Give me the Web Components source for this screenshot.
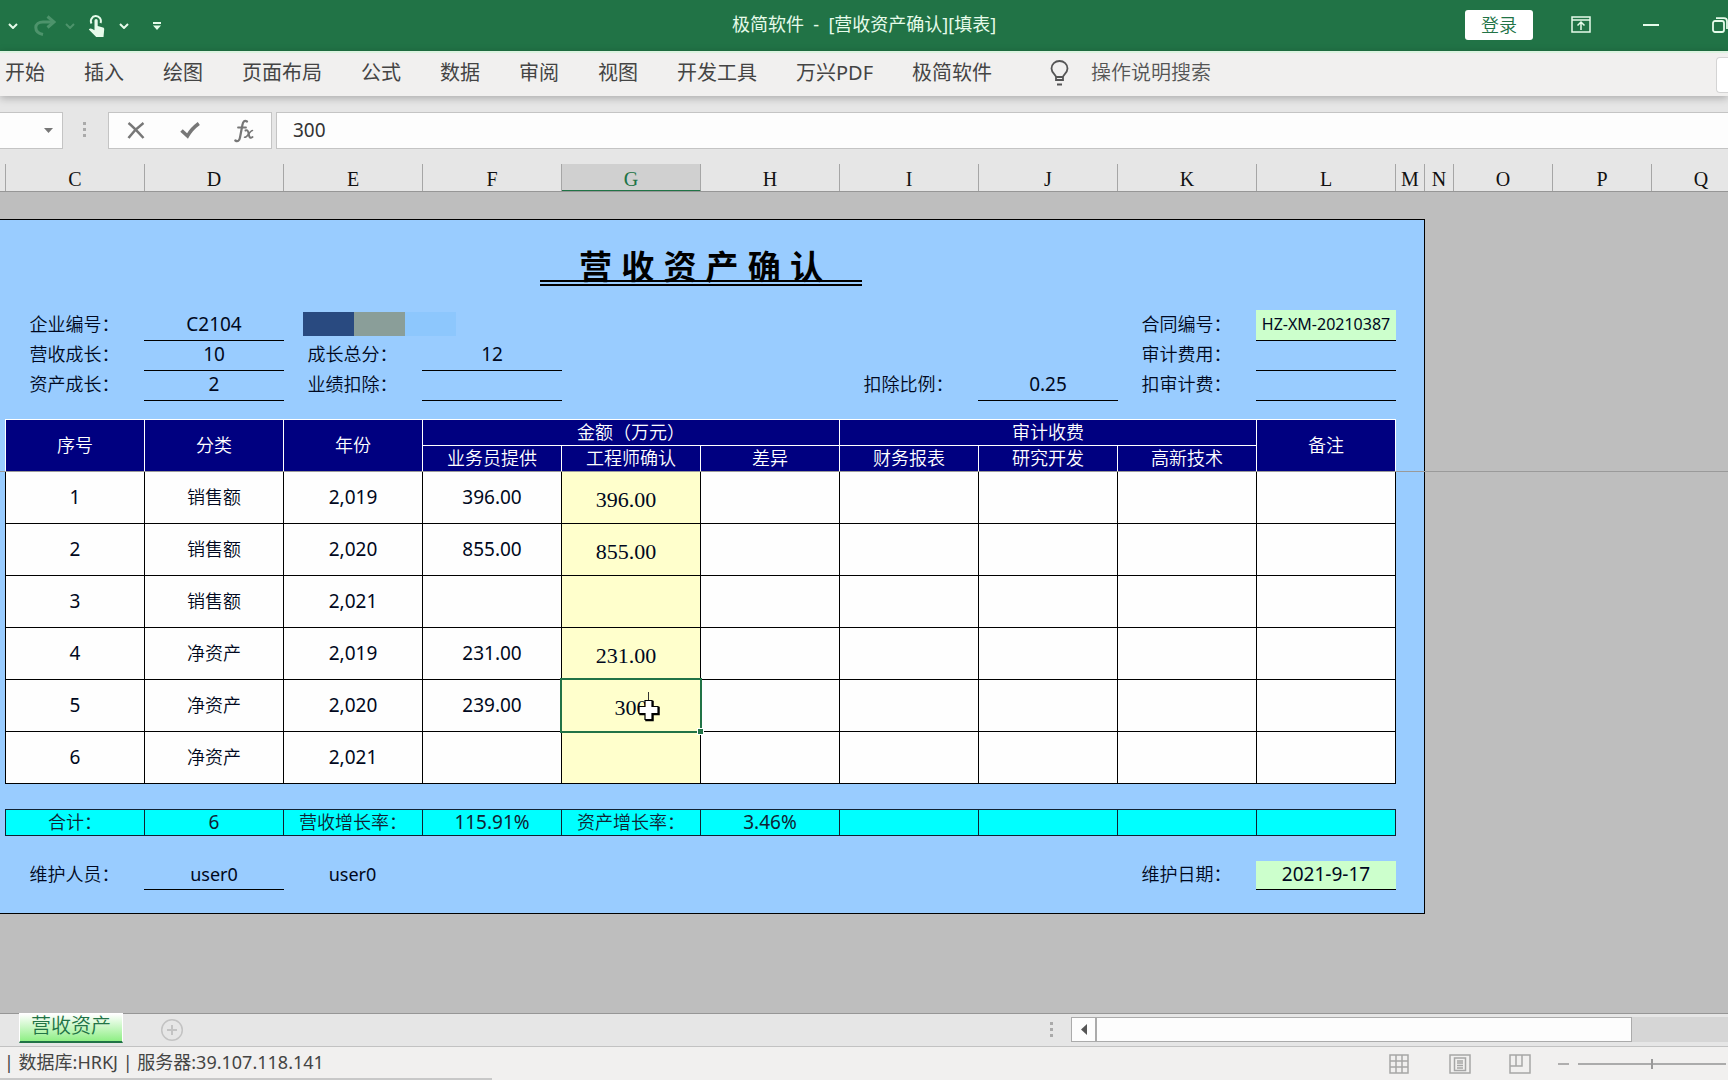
<!DOCTYPE html>
<html lang="zh-CN">
<head>
<meta charset="utf-8">
<title>极简软件 - [营收资产确认][填表]</title>
<style>
html,body{margin:0;height:100%}
body{background:#bebebe;color:#111;font:350 18px/26px "Noto Sans","Noto Sans CJK SC",sans-serif;overflow:hidden}
</style>
</head>
<body>
<xl-app></xl-app>
<script>
const RESET = `
*{box-sizing:border-box}
button,input{font:inherit;color:inherit;border:0;margin:0;padding:0;background:none;border-radius:0;outline:0}
button{display:flex;align-items:center;justify-content:center;white-space:nowrap}
svg{display:block;flex:none}
`;
function define(name, css, html) {
  customElements.define(name, class extends HTMLElement {
    constructor() {
      super();
      this.attachShadow({mode: "open"});
    }
    connectedCallback() {
      const body = typeof html === "function" ? html(this) : html;
      this.shadowRoot.innerHTML = `<style>${RESET}${css}</style>${body}`;
    }
  });
}

define("xl-chevron", `:host{display:block}`,
  `<svg width="10" height="6" viewBox="0 0 10 6" fill="none" stroke="currentColor" stroke-width="2"><path d="M1 1l4 4 4-4"/></svg>`);

define("xl-grip", `:host{display:flex;flex-direction:column;gap:3px}i{width:3px;height:3px;background:#aaa}`,
  `<i></i><i></i><i></i>`);

define("xl-titlebar", `
:host{display:grid;grid-template-columns:1fr auto 1fr;align-items:center;height:51px;background:#217346;color:#e6fbea}
.quick{display:flex;align-items:center;padding-left:8px}
.quick button{height:28px}
.chev{width:10px;margin-right:16px}
.dim{color:#4d936b}
.redo{width:22px;margin-right:9px}
.dim.chev{margin-right:13px}
.touch{width:17px;margin-right:14px}
.custom{width:10px;margin-left:7px}
h1{font:inherit;font-weight:400;margin:0;padding-bottom:4px;white-space:pre}
.win{display:flex;align-items:center;justify-content:flex-end;padding-bottom:2px;min-width:0}
.login{width:68px;height:30px;background:#fff;color:#217346;border-radius:3px;margin-right:38px}
.min{margin:0 53px 0 52px}
.restore{width:16px;overflow:hidden;justify-content:flex-start}
`, `
<div class="quick">
  <button class="chev" aria-label="撤消选项"><xl-chevron></xl-chevron></button>
  <button class="redo dim" aria-label="恢复"><svg width="22" height="22" viewBox="0 0 22 22" fill="none" stroke="currentColor" stroke-width="3"><path d="M9 19.500C4.500 18.500 1.800 16 1.800 12.500 1.800 9 5 7 9 7h10"/><path d="M13.500 1.500L20 7l-6.500 5.500"/></svg></button>
  <button class="chev dim" aria-label="恢复选项"><xl-chevron></xl-chevron></button>
  <button class="touch" aria-label="触摸/鼠标模式"><svg width="17" height="22" viewBox="0 0 17 22"><path d="M3.500 8.500A5 5 0 1 1 12.500 8" fill="none" stroke="currentColor" stroke-width="2"/><path d="M6.500 5.500a1.600 1.600 0 0 1 3.200 0V11l5.300 1.500c1 .4 1.300 1 1.200 2L15.500 22H8.200L.8 14.500c.8-1.400 2.300-1.300 3.500-.6l2.200 1.300z" fill="currentColor"/></svg></button>
  <button class="chev" aria-label="模式选项"><xl-chevron></xl-chevron></button>
  <button class="custom" aria-label="自定义快速访问工具栏"><svg width="8" height="8" viewBox="0 0 8 8" fill="currentColor"><path d="M0 0h8v2H0zM0 3.500h8L4 8z"/></svg></button>
</div>
<h1>极简软件  -  [营收资产确认][填表]</h1>
<div class="win">
  <button class="login">登录</button>
  <button aria-label="功能区显示选项"><svg width="20" height="17" viewBox="0 0 20 17" fill="none" stroke="currentColor" stroke-width="1.500"><path d="M1 1h18v15H1zM1 4h18M10 14V6.500M6.500 9.500L10 6l3.500 3.500"/></svg></button>
  <button class="min" aria-label="最小化"><svg width="16" height="2"><path d="M0 1h16" stroke="currentColor" stroke-width="2"/></svg></button>
  <button class="restore" aria-label="还原"><svg width="18" height="16" viewBox="0 0 18 16" fill="none" stroke="currentColor" stroke-width="1.800"><rect x="1" y="4" width="11" height="11" rx="2"/><path d="M4 1.200h8a3 3 0 0 1 3 3V12"/></svg></button>
</div>`);

define("xl-ribbon", `
:host{display:flex;align-items:center;height:45px;background:#f1f0ef;border-top:2px solid #dcf3e0;color:#444;font-size:20px;box-shadow:0 2px 8px #0004;z-index:1}
nav{display:flex;gap:39px;padding:0 0 3px 5px;font-weight:400}
.tell{margin-left:58px;gap:22px;color:#555;padding-bottom:3px}
.share{margin-left:auto;width:12px;height:36px;background:#fff;border:1px solid #d4d4d4;border-right:0;border-radius:4px 0 0 4px}
`, `
<nav>${["开始","插入","绘图","页面布局","公式","数据","审阅","视图","开发工具","万兴PDF","极简软件"].map(t => `<button>${t}</button>`).join("")}</nav>
<button class="tell"><svg width="19" height="26" viewBox="0 0 19 26" fill="none" stroke="#555" stroke-width="1.800"><path d="M6 20v-3C6 14.500 1.500 13 1.500 8.500a8 7.500 0 0 1 16 0C17.500 13 13 14.500 13 17v3zM6 17h7"/><path d="M7 24.500h5" stroke-width="2"/></svg>操作说明搜索</button>
<button class="share" aria-label="共享"></button>`);

define("xl-formula-bar", `
:host{display:flex;height:68px;padding-top:16px;align-items:flex-start;background:#e6e6e6;color:#444;font-size:19px;font-weight:400}
.name,.acts,input{height:37px;background:#fdfdfd;border:1px solid #c4c4c4}
.name{width:63px;border-left:0;display:flex;align-items:center;justify-content:flex-end;padding-right:9px}
xl-grip{margin:10px 22px 0 20px}
.acts{display:flex;width:164px;margin-right:4px;color:#777}
.acts button{flex:1}
input{flex:1;min-width:0;padding:0 0 2px 16px;border-right:0;color:#333}
`, `
<button class="name" aria-label="名称框"><svg width="9" height="5"><path d="M0 0h9L4.500 5z" fill="#777"/></svg></button>
<xl-grip></xl-grip>
<div class="acts">
  <button aria-label="取消"><svg width="18" height="17" viewBox="0 0 18 17" fill="none" stroke="currentColor" stroke-width="2.500"><path d="M1.500 1c5 4 10 9.500 15 15M16.500 1C11 5 5.500 10.500 1.500 16"/></svg></button>
  <button aria-label="输入"><svg width="20" height="17" viewBox="0 0 20 17" fill="none" stroke="currentColor" stroke-width="3.600"><path d="M1.500 8.500L7.500 14C10 9.500 14 5 18.800 1.500"/></svg></button>
  <button aria-label="插入函数"><svg width="20" height="24" viewBox="0 0 20 24" fill="none" stroke="currentColor" stroke-linecap="round"><path d="M13 2.500C10.500.8 9 2.500 8.400 6L6 18.500C5.400 22 3.500 23 1.300 21.500" stroke-width="2.200"/><path d="M4 8.500h8" stroke-width="1.800"/><path d="M11.500 11.500c2-1 2.700.5 3.200 3.500.5 3.500 1.500 4.500 3.800 3" stroke-width="2"/><path d="M18.500 11.500c-3 0-4.500 7-8 6.800" stroke-width="1.500"/></svg></button>
</div>
<input aria-label="编辑栏" value="300">`);

define("xl-columns", `
:host{display:flex;height:28px;background:#e6e6e6;border-bottom:1px solid #969696;font:400 20px/30px "Liberation Serif",serif;flex:none;overflow:hidden}
span{flex:none;width:139px;height:28px;text-align:center;border-right:1px solid #a6a6a6}
.edge{width:6px}.thin{width:29px}.mid{width:99px}
.on{background:#d0d0d0;color:#217346;border-bottom:2px solid #217346}
`, `<span class="edge"></span>${[..."CDEFGHIJKL"].map(c => `<span class="${c === "G" ? "on" : ""}">${c}</span>`).join("")}<span class="thin">M</span><span class="thin">N</span><span class="mid">O</span><span class="mid">P</span><span class="mid">Q</span>`);

define("xl-field", `
:host{display:grid;grid-template-columns:139px 140px;height:30px;line-height:28px}
label{text-align:center}
input{min-width:0;width:100%;text-align:center;font-size:19px;font-weight:400;border-bottom:1px solid #000;padding-bottom:2px}
:host([tone=edit]) input{background:#ccffcc}
:host([small]) input{font-size:16px}
:host([word]) input{font-size:18px}
`, el => `<label for="v">${el.getAttribute("label")}</label><input id="v" value="${el.getAttribute("value") || ""}" readonly>`);

define("xl-table", `
:host{display:block}
table{table-layout:fixed;width:1391px;border-collapse:separate;border-spacing:0;text-align:center;line-height:24px}
col{width:139px}
col:last-child{width:140px}
th,td{padding:0;font-weight:inherit;border:solid #000;border-width:1px 0 0 1px;height:52px}
th{background:#000080;color:#fff;border-color:#fff;height:26px;line-height:22px;padding-bottom:2px}
td{background:#fefefe;font-size:19px;font-weight:400;padding-bottom:1px}
td.cn{font-size:18px;font-weight:inherit}
td:last-child,th.end{border-right-width:1px}
tr:last-child td{border-bottom-width:1px;height:53px}
td.in{background:#ffffcc;font:400 22px/24px "Liberation Serif",serif;padding:4px 10px 0 0}
td.edit{position:relative;padding-right:0}
td.edit input{display:block;width:100%;text-align:center}
td.edit::before{content:"";position:absolute;inset:-2px;border:2px solid #217346;pointer-events:none}
td.edit::after{content:"";position:absolute;right:-3px;bottom:-3px;width:5px;height:5px;background:#217346;outline:1px solid #fff}
svg{position:absolute;left:76px;top:12px;z-index:1}
`, () => {
  const rows = [["销售额","2,019","396.00","396.00"],["销售额","2,020","855.00","855.00"],["销售额","2,021","",""],
    ["净资产","2,019","231.00","231.00"],["净资产","2,020","239.00","300"],["净资产","2,021","",""]];
  const cross = "h7v6h6v7h-6v6h-7v-6h-6v-7h6z";
  const cursor = `<svg width="23" height="30" viewBox="0 0 23 30"><path d="M10.500 0v9" stroke="#333"/><path d="M8 9.500${cross}" stroke="#000" stroke-width="1.500"/><path d="M7 8.500${cross}" fill="#fff" stroke="#000" stroke-width="1.200"/></svg>`;
  return `<table><colgroup>${"<col>".repeat(10)}</colgroup>
<thead><tr><th rowspan="2">序号</th><th rowspan="2">分类</th><th rowspan="2">年份</th><th colspan="3">金额（万元）</th><th colspan="3">审计收费</th><th rowspan="2" class="end">备注</th></tr>
<tr><th>业务员提供</th><th>工程师确认</th><th>差异</th><th>财务报表</th><th>研究开发</th><th>高新技术</th></tr></thead>
<tbody>${rows.map((r, i) => `<tr><td>${i + 1}</td><td class="cn">${r[0]}</td><td>${r[1]}</td><td>${r[2]}</td>${
    r[3] === "300" ? `<td class="in edit"><input aria-label="工程师确认" value="300">${cursor}</td>` : `<td class="in">${r[3]}</td>`
  }${"<td></td>".repeat(5)}</tr>`).join("")}</tbody></table>`;
});

define("xl-totals", `
:host{display:block}
table{table-layout:fixed;width:1391px;border-collapse:separate;border-spacing:0;text-align:center;line-height:25px}
col{width:139px}
col:last-child{width:140px}
td,th{padding:0;height:27px;font-weight:inherit;background:#00ffff;border:solid #123;border-width:1px 0 1px 1px;color:#123}
td{font-size:19px;font-weight:400}
td:last-child{border-right-width:1px}
`, `<table><colgroup>${"<col>".repeat(10)}</colgroup><tr><th>合计：</th><td>6</td><th>营收增长率：</th><td>115.91%</td><th>资产增长率：</th><td>3.46%</td><td></td><td></td><td></td><td></td></tr></table>`);

define("xl-sheet", `
:host{display:block;position:relative;flex:1;min-height:0;padding-top:27px;background:#bebebe;overflow:hidden}
main{width:1425px;padding:0 0 25px 5px;background:#99ccff;border:solid #000;border-width:1px 1px 1px 0;color:#000820}
.head{display:flex;height:90px;padding:24px 0 0 535px}
h2{margin:0;width:322px;height:42px;text-align:center;font:700 33px/48px "Liberation Sans","Noto Sans CJK SC",sans-serif;border-bottom:6px double #000;color:#000}
.form{display:grid;grid-template-columns:repeat(10,139px);grid-auto-rows:30px}
.form>*{grid-column-end:span 2}
.a{grid-column-start:1}.b{grid-column-start:3}.c{grid-column-start:7}.d{grid-column-start:9}
.mask{display:flex;margin:2px 0 0 20px}
.mask i{width:51px;height:24px;background:#294a80}
.mask i+i{background:#8a9e99}
.mask i+i+i{background:#8dc7fd}
xl-table{margin:19px 0 25px}
.foot{margin-top:25px;height:27px;grid-auto-rows:27px;line-height:26px}
.foot xl-field{height:27px;line-height:26px}
.foot span{grid-column:3/span 1;text-align:center;font-weight:400}
.freeze{position:absolute;left:0;right:0;top:279px;height:1px;background:#9a9a9a}
`, `
<main>
  <div class="head"><h2>营 收 资 产 确 认</h2></div>
  <div class="form">
    <xl-field class="a" label="企业编号：" value="C2104"></xl-field><div class="b mask"><i></i><i></i><i></i></div><xl-field class="d" label="合同编号：" value="HZ-XM-20210387" tone="edit" small></xl-field>
    <xl-field class="a" label="营收成长：" value="10"></xl-field><xl-field class="b" label="成长总分：" value="12"></xl-field><xl-field class="d" label="审计费用："></xl-field>
    <xl-field class="a" label="资产成长：" value="2"></xl-field><xl-field class="b" label="业绩扣除："></xl-field><xl-field class="c" label="扣除比例：" value="0.25"></xl-field><xl-field class="d" label="扣审计费："></xl-field>
  </div>
  <xl-table></xl-table>
  <xl-totals></xl-totals>
  <div class="form foot"><xl-field class="a" label="维护人员：" value="user0" word></xl-field><span>user0</span><xl-field class="d" label="维护日期：" value="2021-9-17" tone="edit"></xl-field></div>
</main>
<div class="freeze"></div>`);

define("xl-tabs", `
:host{display:flex;height:34px;flex:none;background:#e6e6e6;border-top:1px solid #969696;border-bottom:1px solid #c2c2c2}
.tab{width:104px;height:30px;margin:-1px 37px 0 19px;font-size:20px;color:#217346;background:linear-gradient(#fff,#8fef85);border:1px solid #fff;border-bottom:2px solid #217346;line-height:24px;padding-bottom:3px}
.add{width:24px}
xl-grip{margin:8px 18px 0 auto}
.bar{display:flex;width:657px;height:25px;margin-top:3px;background:#d6d6d6}
.bar button{width:25px;background:#fdfdfd;border:1px solid #ababab}
.bar i{width:536px;background:#fdfdfd;border:1px solid #ababab}
`, `
<button class="tab">营收资产</button>
<button class="add" aria-label="新工作表"><svg width="24" height="24" viewBox="0 0 24 24" fill="none" stroke="#c3c3c3"><circle cx="12" cy="12" r="10.300" stroke-width="1.500"/><path d="M12 7v10M7 12h10" stroke-width="2"/></svg></button>
<xl-grip></xl-grip>
<div class="bar"><button aria-label="向左滚动"><svg width="6" height="11"><path d="M6 0v11L0 5.500z" fill="#555"/></svg></button><i></i></div>`);

define("xl-status", `
:host{display:flex;align-items:center;height:33px;flex:none;background:linear-gradient(#c8c8c8,#c8c8c8) left bottom/492px 2px no-repeat #f1f0ef;color:#444;padding:0 2px 0 4px}
span{font-weight:400;padding-bottom:3px}
.icons{display:flex;gap:38px;margin-left:auto;color:#a6a6a6}
.minus{margin:0 9px 0 27px}
input{appearance:none;-webkit-appearance:none;width:148px;height:20px;background:linear-gradient(#ababab,#ababab) center/100% 2px no-repeat}
input::-webkit-slider-thumb{-webkit-appearance:none;width:2px;height:10px;background:#999}
`, `
<span>| 数据库:HRKJ | 服务器:39.107.118.141</span>
<div class="icons">
  <button aria-label="普通"><svg width="22" height="20" viewBox="0 0 22 20" fill="none" stroke="currentColor" stroke-width="1.500"><path d="M1 1h18v18H1zM7 1v18M13 1v18M1 7h18M1 13h18"/></svg></button>
  <button aria-label="页面布局"><svg width="22" height="20" viewBox="0 0 22 20" fill="none" stroke="currentColor" stroke-width="1.500"><path d="M1 1h20v18H1zM5.500 4h11v12.500h-11zM8 7h6M8 9h6M8 11.500h6M8 14h6"/></svg></button>
  <button aria-label="分页预览"><svg width="22" height="20" viewBox="0 0 22 20" fill="none" stroke="currentColor" stroke-width="1.500"><path d="M1 1h20v18H1zM1 12h12V1M7 1v11"/></svg></button>
</div>
<button class="minus" aria-label="缩小"><svg width="11" height="2"><path d="M0 1h11" stroke="#999" stroke-width="1.500"/></svg></button>
<input type="range" aria-label="缩放" value="50">`);

define("xl-app", `:host{display:flex;flex-direction:column;height:100vh}`, `
<xl-titlebar></xl-titlebar><xl-ribbon></xl-ribbon><xl-formula-bar></xl-formula-bar><xl-columns></xl-columns><xl-sheet></xl-sheet><xl-tabs></xl-tabs><xl-status></xl-status>`);
</script>
</body>
</html>
